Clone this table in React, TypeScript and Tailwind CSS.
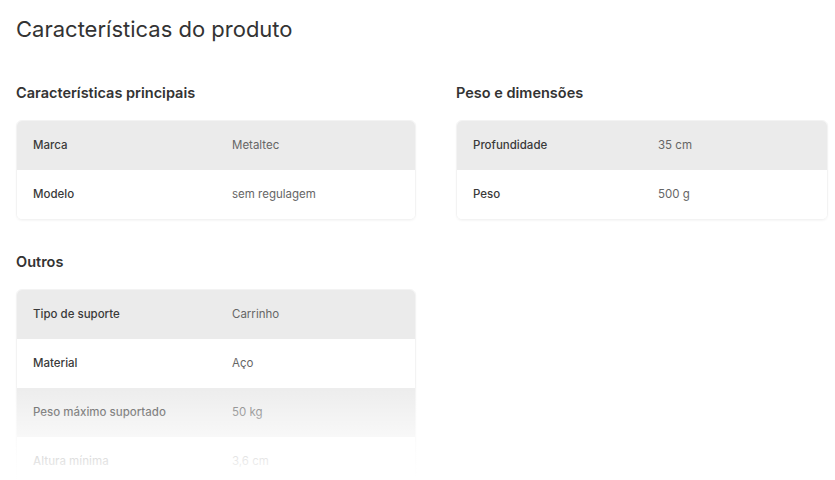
import React from 'react';

type Row = { label: string; value: string };

const principais: Row[] = [
  { label: 'Marca', value: 'Metaltec' },
  { label: 'Modelo', value: 'sem regulagem' },
];

const peso: Row[] = [
  { label: 'Profundidade', value: '35 cm' },
  { label: 'Peso', value: '500 g' },
];

const outros: Row[] = [
  { label: 'Tipo de suporte', value: 'Carrinho' },
  { label: 'Material', value: 'Aço' },
  { label: 'Peso máximo suportado', value: '50 kg' },
  { label: 'Altura mínima', value: '3,6 cm' },
];

const SpecTable: React.FC<{ rows: Row[] }> = ({ rows }) => (
  <div className="rounded-md border border-[#f3f3f3] overflow-hidden shadow-[0_1px_2px_rgba(0,0,0,0.04)]">
    {rows.map((row, i) => (
      <div
        key={row.label}
        className={`grid grid-cols-2 h-[49px] items-center text-[11.5px] ${i % 2 === 0 ? 'bg-[#ebebeb]' : 'bg-white'}`}
      >
        <div className="px-4 font-medium text-[#3a3a3a]">{row.label}</div>
        <div className="px-4 text-[#666]">{row.value}</div>
      </div>
    ))}
  </div>
);

const Section: React.FC<{ title: string; rows: Row[] }> = ({ title, rows }) => (
  <div>
    <h3 className="text-[14.5px] font-semibold text-[#333] leading-5 mb-[17px]">{title}</h3>
    <SpecTable rows={rows} />
  </div>
);

export default function App() {
  return (
    <div
      className="relative w-[835px] h-[480px] overflow-hidden bg-white pl-4 pt-[15px]"
      style={{ fontFamily: 'Inter, "Open Sans", sans-serif' }}
    >
      <h2 className="text-[22px] leading-7 text-[#333]">Características do produto</h2>

      <div className="mt-10 grid grid-cols-[400px_372px] gap-x-10">
        <div className="flex flex-col gap-8">
          <Section title="Características principais" rows={principais} />
          <Section title="Outros" rows={outros} />
        </div>
        <div>
          <Section title="Peso e dimensões" rows={peso} />
        </div>
      </div>

      {/* fade out at the bottom */}
      <div className="absolute inset-x-0 bottom-0 h-[100px] bg-gradient-to-b from-white/0 via-white/70 via-60% to-white" />
    </div>
  );
}
